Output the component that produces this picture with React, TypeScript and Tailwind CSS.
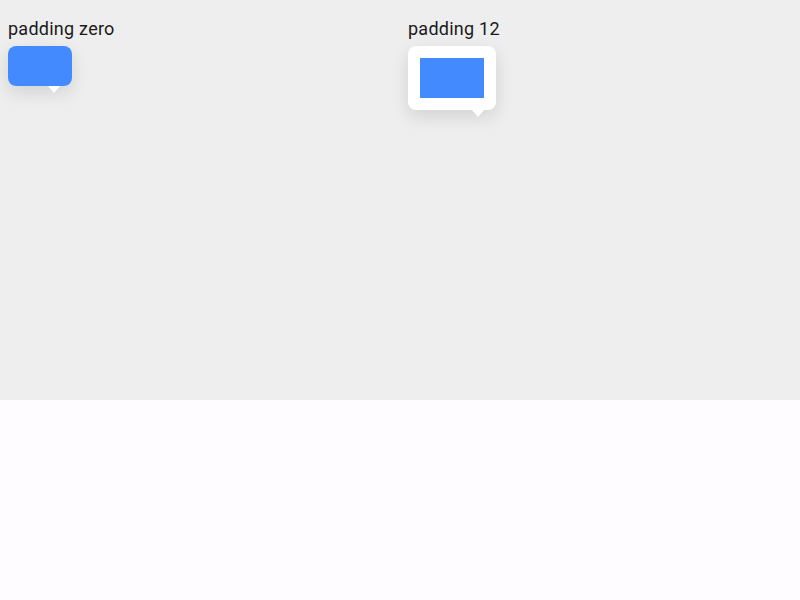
import React from "react";

function Popover({ padded }: { padded: boolean }) {
  return (
    <div className="relative inline-block">
      <div
        className={`relative rounded-lg bg-white shadow-[0_6px_18px_rgba(0,0,0,0.12)] ${padded ? "p-3" : ""}`}
      >
        <div className={`w-16 h-10 bg-[#448aff] ${padded ? "" : "rounded-lg"}`} />
      </div>
      <div className="absolute top-full right-3 w-0 h-0 border-l-[6px] border-r-[6px] border-t-[7px] border-l-transparent border-r-transparent border-t-white" />
    </div>
  );
}

export default function App() {
  return (
    <div className="w-[800px] h-[600px] bg-[#fffcff]" style={{ fontFamily: "Roboto, sans-serif" }}>
      <div className="h-[400px] bg-[#eeeeee] grid grid-cols-2">
        <div className="p-2">
          <div className="text-[18px] leading-[26px] tracking-[0.25px] text-[#1a1a1a] mb-[4px] mt-[8px]">padding zero</div>
          <Popover padded={false} />
        </div>
        <div className="p-2">
          <div className="text-[18px] leading-[26px] tracking-[0.25px] text-[#1a1a1a] mb-[4px] mt-[8px]">padding 12</div>
          <Popover padded={true} />
        </div>
      </div>
    </div>
  );
}
